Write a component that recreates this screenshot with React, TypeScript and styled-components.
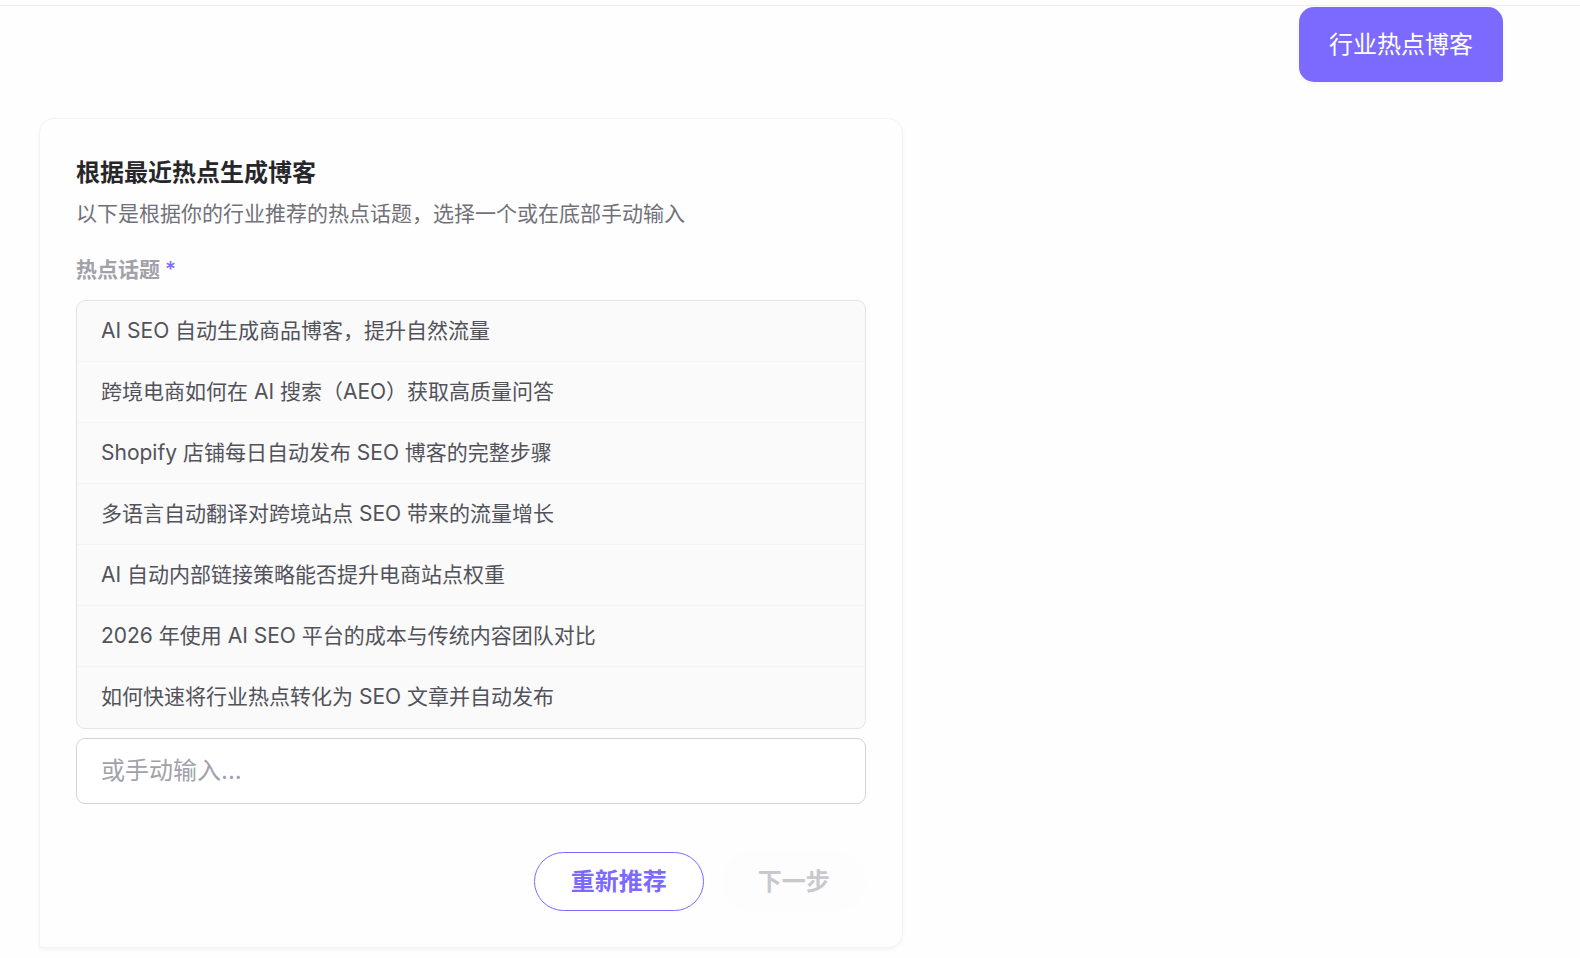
import React, { useState } from "react";
import styled, { createGlobalStyle } from "styled-components";

const GlobalStyle = createGlobalStyle`
  *, *::before, *::after { box-sizing: border-box; }
  body {
    margin: 0;
    background: #fefefe;
    font-family: Inter, "Noto Sans CJK SC", sans-serif;
    -webkit-font-smoothing: antialiased;
  }
  button, input { font-family: inherit; }
`;

const Page = styled.main`
  padding-top: 5px;
`;

const Thread = styled.div`
  display: flex;
  flex-direction: column;
  gap: 36px;
  padding: 1px 77px 10px 39px;
  border-top: 1px solid #ededf0;
`;

const UserMessage = styled.p`
  align-self: flex-end;
  margin: 0;
  padding: 20px 30px 19px;
  border-radius: 15px 15px 3px 15px;
  background: #7c6aff;
  color: #fff;
  font-size: 24px;
  line-height: 36px;
  box-shadow: 0 2px 4px rgba(0, 0, 0, 0.04);
`;

const Card = styled.form`
  width: 59%;
  min-width: 600px;
  padding: 36px;
  border: 1px solid #f4f4f5;
  border-radius: 15px 15px 15px 3px;
  background: #fefefe;
  box-shadow: 0 2px 4px rgba(0, 0, 0, 0.04);
`;

const Title = styled.h2`
  margin: 0;
  color: #27272a;
  font-size: 24px;
  font-weight: 600;
  line-height: 36px;
`;

const Description = styled.p`
  margin: 6px 0 0;
  color: #71717a;
  font-size: 21px;
  line-height: 34px;
`;

const FieldLabel = styled.label`
  display: flex;
  gap: 5px;
  margin: 24px 0 15px;
  color: #a1a1aa;
  font-size: 21px;
  font-weight: 600;
  line-height: 30px;
`;

const Required = styled.span`
  color: #7c6aff;
  font-weight: 500;
`;

const TopicList = styled.ul`
  margin: 0 0 9px;
  padding: 0;
  overflow: hidden;
  list-style: none;
  border: 1px solid #e4e4e7;
  border-radius: 9px;
  background: #fafafa;
`;

const TopicItem = styled.li`
  border-bottom: 1px solid #f4f4f5;

  &:last-child { border-bottom-color: transparent; }
`;

const Topic = styled.button`
  display: block;
  width: 100%;
  padding: 15px 24px;
  border: 0;
  background: transparent;
  color: #52525b;
  font-size: 21px;
  line-height: 30px;
  text-align: left;
  cursor: pointer;
`;

const TopicInput = styled.input`
  display: block;
  width: 100%;
  height: 66px;
  padding: 0 24px 2px;
  border: 1px solid #d4d4d8;
  border-radius: 9px;
  background: #fff;
  color: #27272a;
  font-size: 24px;

  &::placeholder { color: #a1a1aa; }
`;

const Actions = styled.div`
  display: flex;
  justify-content: flex-end;
  gap: 18px;
  margin-top: 48px;
`;

const ActionButton = styled.button<{ $outlined?: boolean }>`
  height: 59px;
  padding: 0 36px;
  border: ${(p) => (p.$outlined ? "1px solid #7c6aff" : "0")};
  border-radius: 30px;
  background: ${(p) => (p.$outlined ? "#fff" : "#fdfdfd")};
  color: ${(p) => (p.$outlined ? "#7c6aff" : "#c8c8cf")};
  font-size: 24px;
  font-weight: 600;
  line-height: 36px;
`;

const topics = [
  "AI SEO 自动生成商品博客，提升自然流量",
  "跨境电商如何在 AI 搜索（AEO）获取高质量问答",
  "Shopify 店铺每日自动发布 SEO 博客的完整步骤",
  "多语言自动翻译对跨境站点 SEO 带来的流量增长",
  "AI 自动内部链接策略能否提升电商站点权重",
  "2026 年使用 AI SEO 平台的成本与传统内容团队对比",
  "如何快速将行业热点转化为 SEO 文章并自动发布",
];

export default function App() {
  const [topic, setTopic] = useState("");

  return (
    <Page lang="zh-CN">
      <GlobalStyle />
      <Thread>
        <UserMessage>行业热点博客</UserMessage>
        <Card onSubmit={(e) => e.preventDefault()}>
          <Title>根据最近热点生成博客</Title>
          <Description>以下是根据你的行业推荐的热点话题，选择一个或在底部手动输入</Description>
          <FieldLabel htmlFor="topic">
            热点话题<Required>*</Required>
          </FieldLabel>
          <TopicList>
            {topics.map((t) => (
              <TopicItem key={t}>
                <Topic type="button" onClick={() => setTopic(t)}>{t}</Topic>
              </TopicItem>
            ))}
          </TopicList>
          <TopicInput
            id="topic"
            type="text"
            placeholder="或手动输入..."
            value={topic}
            onChange={(e) => setTopic(e.target.value)}
          />
          <Actions>
            <ActionButton type="button" $outlined>重新推荐</ActionButton>
            <ActionButton type="submit" disabled={!topic}>下一步</ActionButton>
          </Actions>
        </Card>
      </Thread>
    </Page>
  );
}
